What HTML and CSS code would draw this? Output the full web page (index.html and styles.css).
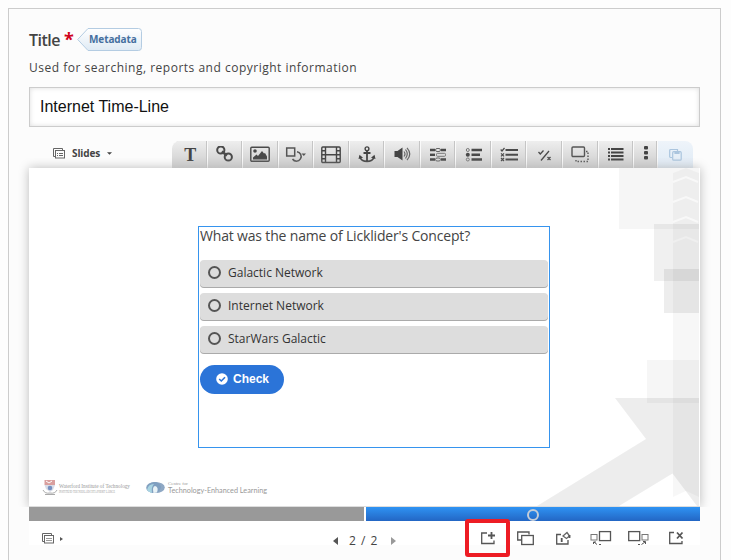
FILE: index.html
```html
<!DOCTYPE html>
<html lang="en">
<head>
<meta charset="utf-8">
<title>Internet Time-Line</title>
<link rel="stylesheet" href="styles.css">
</head>
<body>
<main class="panel">
  <header class="heading">
    <span class="heading-title">Title</span><span class="required">*</span>
    <span class="metadata">
      <svg class="metadata-shape" width="65" height="24" viewBox="0 0 65 24"><defs><linearGradient id="tag" x1="0" y1="0" x2="0" y2="1"><stop offset="0" stop-color="#fff"/><stop offset="1" stop-color="#dfeaf4"/></linearGradient></defs><path d="M11 .5H61.500Q64.500 .5 64.500 3.500V19.500Q64.500 22.500 61.500 22.500H11L.7 11.500Z" fill="url(#tag)" stroke="#b4cce2"/></svg>
      <span class="metadata-label">Metadata</span>
    </span>
  </header>
  <p class="description">Used for searching, reports and copyright information</p>
  <div class="field">Internet Time-Line</div>

  <div class="bar">
    <div class="slides-menu">
      <svg width="12" height="11" viewBox="0 0 12 11" fill="none" stroke="#666"><path d="M2.500 8.500H.5V.5H9.500V2.500"/><rect x="2.500" y="2.500" width="9" height="7.500"/><path d="M4 5.500h1M6 5.500h4M4 7.500h1M6 7.500h4" /></svg>
      <span>Slides</span>
      <svg width="5" height="3" viewBox="0 0 6 3"><path d="M0 0H6L3 3Z" fill="#444"/></svg>
    </div>
    <div class="tools">
      <div class="tool tool-first"><span class="tool-letter">T</span></div>
      <div class="tool"><svg width="18" height="18" viewBox="0 0 18 18" fill="none" stroke="#4a4a4a" stroke-width="2"><circle cx="4.800" cy="4" r="3.600"/><circle cx="12.300" cy="11" r="3.600"/><path d="M5.800 5.500L11 9.500" stroke-width="2.500"/></svg></div>
      <div class="tool"><svg width="20" height="18" viewBox="0 0 20 18"><rect x=".8" y="1.300" width="18.400" height="14" rx="1" fill="none" stroke="#4a4a4a" stroke-width="1.400"/><circle cx="5" cy="5" r="1.800" fill="#4a4a4a"/><path d="M3 13.500V11.500L6.500 8.500L8 10L12 5L14 7.500L15 7L17 10.500V13.500Z" fill="#4a4a4a"/></svg></div>
      <div class="tool"><svg width="22" height="18" viewBox="0 0 22 18" fill="none" stroke="#555" stroke-width="1.500"><rect x="1.700" y="2" width="8" height="8"/><path d="M12 5.800A4.700 4.700 0 1 1 7.500 13"/><path d="M16.500 7.500H21L18.800 10Z" fill="#555" stroke="none"/></svg></div>
      <div class="tool"><svg width="20" height="18" viewBox="0 0 20 18" fill="none" stroke="#444" stroke-width="1.400"><rect x=".8" y="1" width="18.400" height="15.500" rx="1"/><path d="M4.500 1V16.500M15.500 1V16.500M4.500 8.800H15.500M1 4.800H4.500M1 8.800H4.500M1 12.700H4.500M15.500 4.800H19M15.500 8.800H19M15.500 12.700H19"/></svg></div>
      <div class="tool"><svg width="18" height="18" viewBox="0 0 18 18" fill="none" stroke="#444" stroke-width="1.800"><circle cx="9" cy="2.800" r="1.900" stroke-width="1.400"/><path d="M9 5V16M5.500 7H12.500M2 10.500C2.500 17 15.500 17 16 10.500"/><path d="M.5 13L1.500 8.800L5 11.800ZM17.500 13L16.500 8.800L13 11.800Z" fill="#444" stroke="none"/></svg></div>
      <div class="tool"><svg width="20" height="18" viewBox="0 0 20 18" fill="none" stroke="#666" stroke-width="1.200"><path d="M1.500 5H4.500L9.500 1.500V14.500L4.500 11H1.500Z" fill="#444" stroke="none"/><path d="M11 5.500Q13 8 11 10.500M12.500 3.500Q16 8 12.500 12.500M14 1.800Q19.500 8 14 14.200"/></svg></div>
      <div class="tool"><svg width="18" height="18" viewBox="0 0 18 18" fill="none" stroke="#4a4a4a"><path d="M1 4H6M12 4H17M1 13.500H6M12 13.500H17" stroke-width="2.400"/><path d="M1 8.800H6" stroke-width="2.400"/><rect x="6.500" y="2.500" width="5" height="3" rx="1.500" stroke="#666"/><rect x="7.500" y="7.300" width="9" height="3" rx="1" stroke="#777"/><rect x="6.500" y="12" width="5" height="3" rx="1.500" stroke="#666"/></svg></div>
      <div class="tool"><svg width="18" height="18" viewBox="0 0 18 18" fill="none" stroke="#4a4a4a"><path d="M6.500 4H17M6.500 8.800H15M6.500 13.500H17" stroke-width="2.400"/><circle cx="2.800" cy="4" r="1.500" stroke="#777"/><circle cx="2.800" cy="8.800" r="2" fill="#4a4a4a" stroke="none"/><circle cx="2.800" cy="13.500" r="1.500" stroke="#777"/></svg></div>
      <div class="tool"><svg width="19" height="18" viewBox="0 0 19 18" fill="none" stroke="#4a4a4a" stroke-width="1.200"><path d="M5.500 4H18M5.500 8.800H18M5.500 13.500H18" stroke-width="2"/><path d="M.7 3.500L2 5L4.500 2M1 7.300L4 10.300M4 7.300L1 10.300M1 12L4 15M4 12L1 15"/></svg></div>
      <div class="tool"><svg width="16" height="18" viewBox="0 0 16 18" fill="none" stroke="#4a4a4a" stroke-width="1.300"><path d="M1.500 6L3.300 8L6.500 4.500M12 5L4 14.500M10.500 11L13.500 14M13.500 11L10.500 14"/></svg></div>
      <div class="tool"><svg width="20" height="18" viewBox="0 0 20 18" fill="none" stroke="#555" stroke-width="1.400"><rect x="2" y="1" width="12.500" height="9.500" rx="1"/><path d="M16 5.500H18V15.500H6V12.500" stroke-dasharray="1.500 1.500"/></svg></div>
      <div class="tool"><svg width="16" height="18" viewBox="0 0 16 18" stroke="#444" stroke-width="1.800"><path d="M0 3H2M3 3H15.500M0 6.500H2M3 6.500H15.500M0 10H2M3 10H15.500M0 13.500H2M3 13.500H15.500"/></svg></div>
      <div class="tool tool-more"><svg width="4" height="16" viewBox="0 0 4 16" fill="#444"><rect y="1" width="4" height="3.500" rx="1"/><rect y="6" width="4" height="3.500" rx="1"/><rect y="11" width="4" height="3.500" rx="1"/></svg></div>
      <div class="tool tool-paste"><svg width="13" height="13" viewBox="0 0 13 13" fill="none" stroke="#abc5de" stroke-width="1.200"><path d="M3 9.500H1.500Q.7 9.500 .7 8.500V2.500Q.7 1.500 1.700 1.500H8.500V3"/><rect x="3.700" y="3.700" width="8.500" height="8.500" rx="1"/><path d="M6 3.500V5.500H10V3.500" fill="#abc5de"/></svg></div>
    </div>
  </div>

  <section class="slide">
    <svg class="artwork" width="671" height="338" viewBox="29 168 671 338">
      <g fill="#000">
        <path d="M619 168H699V229H619Z" fill-opacity=".035"/>
        <path d="M673 173L686 168L699 173V497L686 491L673 497Z" fill-opacity=".03"/>
        <path d="M654 224H699V281H654Z" fill-opacity=".06"/>
        <path d="M664 269H699V313H664Z" fill-opacity=".07"/>
        <path d="M647 360H699V403H647Z" fill-opacity=".035"/>
        <path d="M615 398H699V506H697L672.500 473.500L619 506H537L646 439Z" fill-opacity=".07"/>
      </g>
      <g fill="none" stroke="#fff" stroke-width="2" stroke-opacity=".6"><path d="M673 182L686 177L698 182M673 202L686 197L698 202M673 222L686 217L698 222"/><path d="M673 242L686 237L698 242" stroke-opacity=".3"/></g>
      <g>
        <path d="M44.500 480H55V485H44.500Z" fill="#d99f9e"/><path d="M46 481L49 483L52 481" stroke="#fff" fill="none"/>
        <path d="M44.500 485H55L53 490L50 492L46 489Z" fill="#d8dce7"/><circle cx="50" cy="488" r="2.300" fill="#7790c0"/>
        <path d="M43 490Q45 494 50 493Q55 494 57 490M45 494.500H55" fill="none" stroke="#aaa"/>
      </g>
      <text x="59" y="488" class="logo-text" font-size="6.500" textLength="71" lengthAdjust="spacingAndGlyphs">Waterford Institute of Technology</text>
      <text x="59" y="492.500" class="logo-text" font-size="3.500" textLength="56" lengthAdjust="spacingAndGlyphs">INSTITIÚID TEICNEOLAÍOCHTA PHORT LÁIRGE</text>
      <ellipse cx="155.500" cy="487.500" rx="9.300" ry="5.600" fill="#8fa8c4"/>
      <path d="M146.500 489Q147 483 154 482Q160 482 161 487Q160 492 156 493Q159 487 155 486Q152 486 153 493Q148 492 146.500 489Z" fill="#7f9fc0"/><path d="M147 490Q148 484 154 484Q151 487 152 493Q148 492 147 490Z" fill="#a9d4e2"/><path d="M153.500 493Q152 487 155 486Q159 487 157 492.500Z" fill="#e9f3f7"/>
      <text x="168" y="485" class="logo-text" font-size="4.500" textLength="20" lengthAdjust="spacingAndGlyphs">Centre for</text>
      <text x="168" y="492.500" class="logo-text" font-size="7.500" textLength="99" lengthAdjust="spacingAndGlyphs">Technology-Enhanced Learning</text>
    </svg>
    <div class="quiz">
      <div class="question">What was the name of Licklider's Concept?</div>
      <div class="answers">
        <div class="answer"><i class="radio"></i>Galactic Network</div>
        <div class="answer"><i class="radio"></i>Internet Network</div>
        <div class="answer"><i class="radio"></i>StarWars Galactic</div>
      </div>
      <div class="check"><svg width="12" height="12" viewBox="0 0 12 12"><circle cx="6" cy="6" r="5.800" fill="#fff"/><path d="M3.200 6L5.300 8L9 4.200" fill="none" stroke="#2b74d8" stroke-width="1.600"/></svg>Check</div>
    </div>
  </section>

  <div class="progress">
    <div class="progress-seen"></div>
    <div class="progress-current"><i class="marker"></i></div>
  </div>

  <footer class="footer">
    <div class="keywords">
      <svg width="12" height="11" viewBox="0 0 12 11" fill="none" stroke="#666"><path d="M2.500 8.500H.5V.5H9.500V2.500"/><rect x="2.500" y="2.500" width="9" height="7.500"/><path d="M4 5.500h6M4 7.500h6" stroke="#999"/></svg>
      <svg width="3" height="4" viewBox="0 0 3 4"><path d="M0 0L3 2L0 4Z" fill="#555"/></svg>
    </div>
    <div class="pager">
      <svg width="5" height="8" viewBox="0 0 5 8"><path d="M5 0V8L0 4Z" fill="#555"/></svg>
      <span class="pager-text">2 / 2</span>
      <svg width="5" height="8" viewBox="0 0 5 8"><path d="M0 0V8L5 4Z" fill="#999"/></svg>
    </div>
    <svg class="actions" width="240" height="39" viewBox="460 519 240 39" fill="none" stroke="#555" stroke-width="1.300">
      <path d="M487 533H481.700V543.500H494V540.500"/><path d="M491.500 532V539M488 535.500H495" stroke-width="1.800"/>
      <path d="M521.500 540H517.700V532H529V534.500"/><rect x="521.700" y="535.500" width="11.600" height="9"/>
      <path d="M561 534.500H556.700V544H568V540"/><path d="M563 536L567 532.500L569.500 536L566.500 538.500Z" stroke="#666"/><path d="M569.500 535V538M561.700 538V542" stroke-width="1.800"/>
      <rect x="591" y="534.500" width="6" height="5.500" stroke="#777" stroke-width="1"/><rect x="599.500" y="531.600" width="11" height="9"/><path d="M593.500 544V542H596M594 542L597 544.500M599 544.500H601" stroke-width="1"/>
      <rect x="628.700" y="531.600" width="11" height="9"/><rect x="642" y="534.500" width="6" height="5.500" stroke="#777" stroke-width="1"/><path d="M638 544.500H640M641.500 544.500L645 542M643 541.500H645.500V544" stroke-width="1"/>
      <path d="M674 532.500H669.700V543.500H682V541"/><path d="M677 532.500L682.500 538.500M682.500 532.500L677 538.500" stroke-width="1.800"/>
      <rect x="467" y="521" width="41" height="34" rx="1" stroke="#ed1c24" stroke-width="4"/>
    </svg>
  </footer>
</main>
</body>
</html>
```
FILE: styles.css
```css
* { box-sizing: border-box; }
html, body { height: 100%; }
body { margin: 0; padding: 8px 10px 0 8px; overflow: hidden; background: #fdfdfd; color: #444; font-family: "Open Sans", sans-serif; }
svg { display: block; flex: none; }
.panel { width: 713px; height: 570px; padding: 18px 20px 0; border: 1px solid #ccc; background: #fcfcfc; }
.heading { display: flex; height: 27px; }
.heading-title { width: 35px; font-size: 16px; font-weight: 600; line-height: 26px; letter-spacing: -.5px; }
.required { width: 13px; color: #d0021b; font-size: 18px; font-weight: 700; line-height: 24px; }
.metadata { display: grid; margin-top: 1px; }
.metadata-shape, .metadata-label { grid-area: 1 / 1; }
.metadata-label { padding-left: 12px; color: #456f9f; font-size: 10px; font-weight: 700; line-height: 23px; letter-spacing: -.1px; }
.description { height: 33px; margin: 0; padding-top: 5px; font-size: 12px; line-height: 18px; letter-spacing: .5px; }
.field { height: 40px; padding: 0 10px; border: 1px solid #ccc; background: #fff; box-shadow: inset 0 0 5px #ddd; color: #111; font: 16px/37px "Liberation Sans", sans-serif; }
.bar { display: flex; height: 41px; padding-top: 14px; }
.slides-menu { display: flex; align-items: center; gap: 7px; width: 143px; height: 24px; padding-left: 24px; font-size: 10px; font-weight: 700; letter-spacing: -.1px; }
.tools { display: flex; height: 27px; }
.tool { display: flex; align-items: center; justify-content: center; width: 35.55px; border-right: 1px solid #fafafa; background: linear-gradient(#eee, #ccc); box-shadow: inset -1px 0 #c5c5c5; }
.tool-first { padding-left: 2px; border-top-left-radius: 8px; }
.tool-letter { font: bold 18px/24px "Liberation Serif", serif; }
.tool-more { width: 24px; padding-bottom: 4px; }
.tool-paste { width: 35px; border: 0; border-top-right-radius: 8px; background: linear-gradient(#eef4fa, #dfeaf5); box-shadow: none; }
.slide { display: grid; height: 339px; border-bottom: 1px solid #ddd; background: #fff; box-shadow: 0 0 10px #bbb; clip-path: inset(-10px -15px 0); }
.artwork { grid-area: 1 / 1; }
.logo-text { fill: #999; font-family: "Liberation Serif", serif; }
.logo-text:last-child { font-family: Lato, sans-serif; }
.quiz { grid-area: 1 / 1; width: 352px; height: 222px; margin: 58px 0 0 169px; padding: 0 1px 1px; border: 1px solid #3694ee; }
.question { height: 33px; font-size: 14px; line-height: 18px; letter-spacing: -.17px; }
.answers { display: grid; gap: 6px; }
.answer { display: flex; align-items: center; gap: 7px; height: 27px; padding: 0 8px 3px; border-radius: 4px; background: #ddd; box-shadow: 0 1px #aaa; color: #333; font-size: 12px; }
.radio { width: 13px; height: 13px; border: 2px solid #555; border-radius: 50%; }
.check { display: flex; align-items: center; gap: 5px; width: 84px; height: 29px; margin-top: 12px; padding: 0 0 2px 16px; border-radius: 15px; background: #2b74d8; color: #fff; font: bold 12px "Liberation Sans", sans-serif; }
.progress { display: flex; gap: 2px; height: 14px; background: #fff; }
.progress-seen { width: 335px; background: #999; }
.progress-current { display: flex; justify-content: center; width: 334px; padding-top: 2px; background: linear-gradient(#2f93f3, #2366c4); }
.marker { width: 12px; height: 12px; border: 2px solid #c5cdd8; border-radius: 50%; }
.footer { display: flex; height: 39px; background: linear-gradient(#fff 24px, #fcfcfc 24px); }
.keywords { display: flex; align-items: center; gap: 6px; width: 304px; height: 35px; padding-left: 13px; }
.pager { display: flex; align-items: center; width: 127px; height: 39px; }
.pager-text { width: 53px; padding-left: 11px; font-size: 12px; letter-spacing: 1px; }
.actions { margin-top: -2px; }
```
